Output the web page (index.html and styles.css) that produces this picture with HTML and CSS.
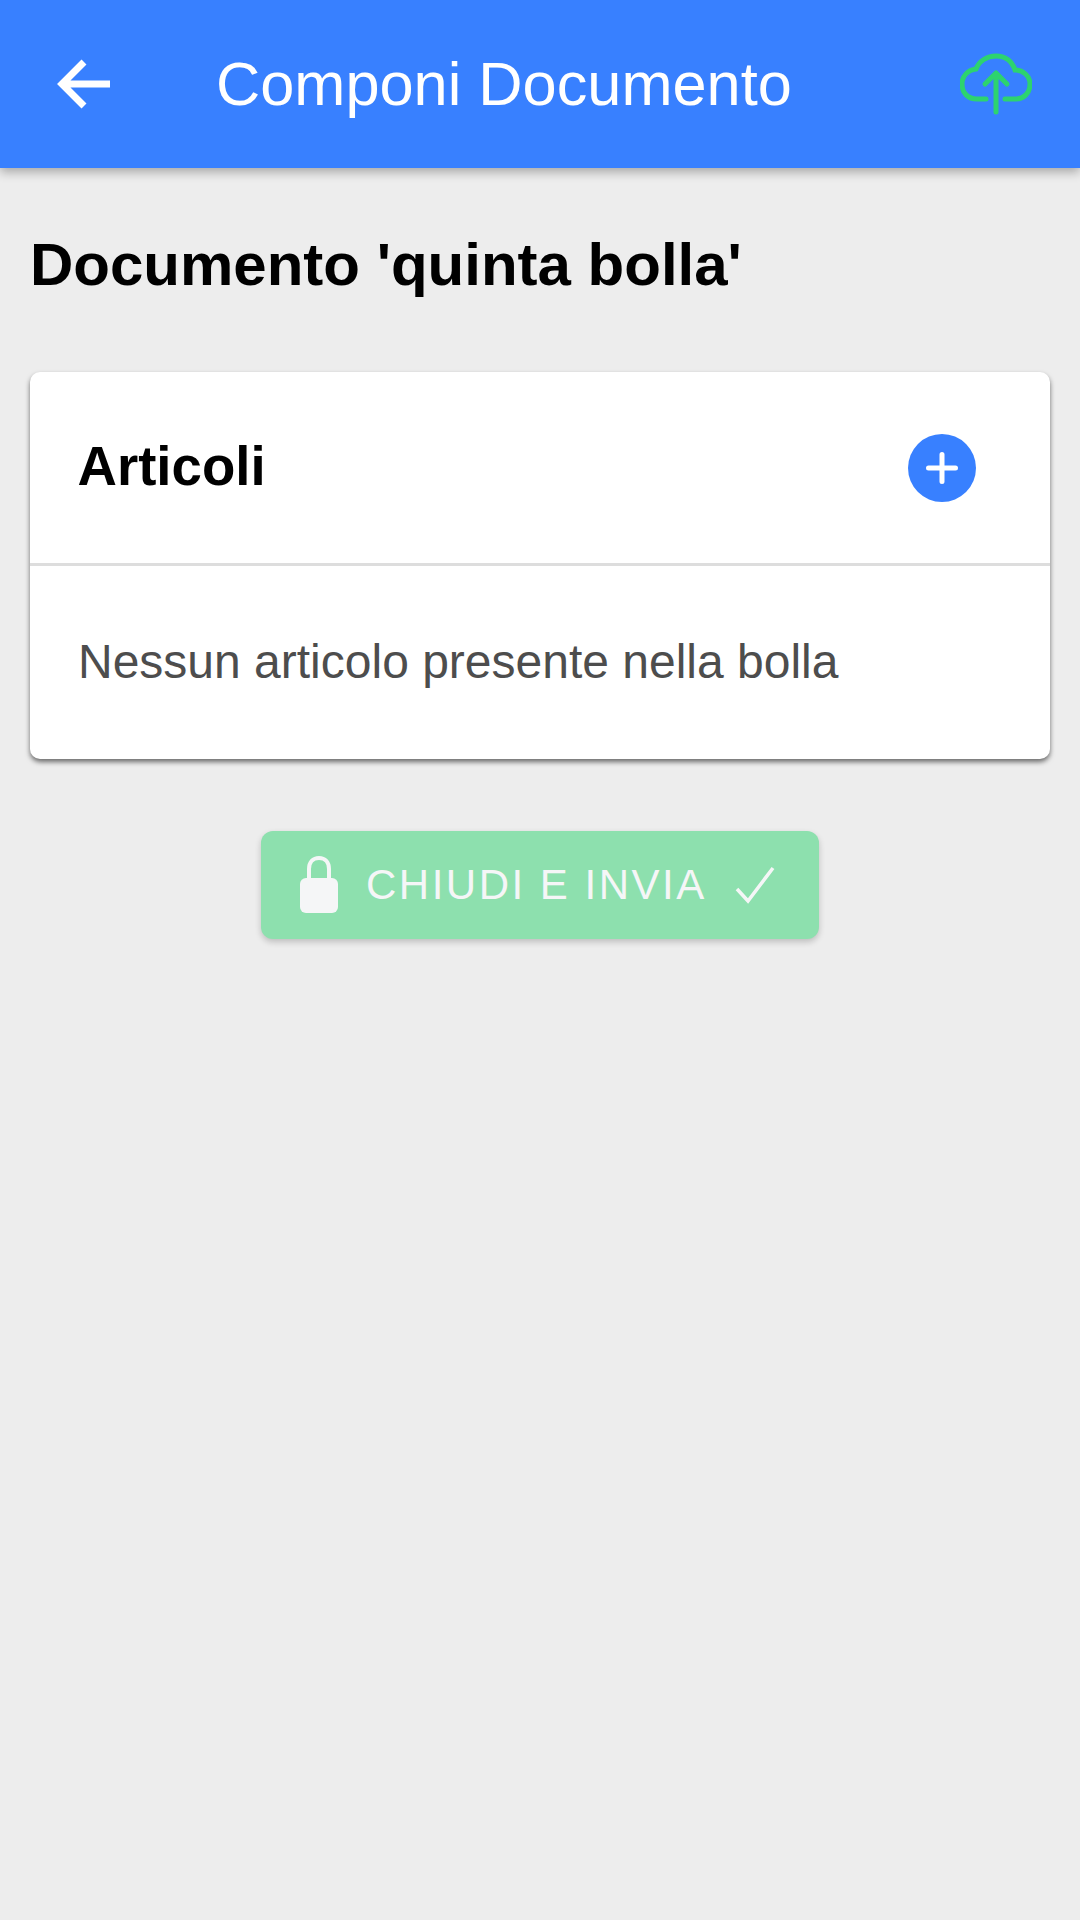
FILE: index.html
```html
<!DOCTYPE html>
<html>
<head>
    <meta charset="utf-8">
    <meta name="viewport" content="width=device-width, initial-scale=1">
    <title>Componi Documento</title>
    <link rel="stylesheet" href="styles.css">
</head>
<body>
    <header class="toolbar">
        <svg class="back-icon" viewBox="0 0 54 50" width="54" height="50">
            <path d="M27 3 L5 25 L27 47 M5 25 H53" fill="none" stroke="#fff" stroke-width="7"/>
        </svg>
        <h1 class="toolbar-title">Componi Documento</h1>
        <svg class="cloud-icon" viewBox="0 0 72 62" width="72" height="62">
            <path d="M26 46 H17 C8 46 2 40 2 31 C2 23 8 17 16 16 C19 8 27 3 36 3 C45 3 52 8 55 17 C63 17 70 23 70 31 C70 40 64 46 55 46 H45" fill="none" stroke="#2dd36f" stroke-width="5" stroke-linecap="round"/>
            <path d="M36 59 V21 M25 31 L36 20 L47 31" fill="none" stroke="#2dd36f" stroke-width="5" stroke-linecap="round" stroke-linejoin="round"/>
        </svg>
    </header>

    <main class="content">
        <h2 class="doc-title">Documento 'quinta bolla'</h2>

        <section class="card">
            <div class="card-head">
                <h3 class="card-title">Articoli</h3>
                <button class="add-btn" type="button">
                    <svg viewBox="0 0 32 32" width="32" height="32">
                        <path d="M16 2.5 V29.5 M2.5 16 H29.5" fill="none" stroke="#fff" stroke-width="5" stroke-linecap="round"/>
                    </svg>
                </button>
            </div>
            <div class="card-body">Nessun articolo presente nella bolla</div>
        </section>

        <div class="actions">
            <button class="send-btn" type="button">
                <svg class="lock-icon" viewBox="0 0 40 58" width="40" height="58">
                    <path d="M10 24 V13 C10 6 14 2 20 2 C26 2 30 6 30 13 V24" fill="none" stroke="#f5f6f7" stroke-width="4"/>
                    <rect x="1" y="22" width="38" height="35" rx="6" fill="#f5f6f7"/>
                </svg>
                <span class="send-label">CHIUDI E INVIA</span>
                <svg class="check-icon" viewBox="0 0 40 38" width="40" height="38">
                    <path d="M2 23 L13 35 L38 2" fill="none" stroke="#f5f6f7" stroke-width="3.5"/>
                </svg>
            </button>
        </div>
    </main>
</body>
</html>
```

FILE: styles.css
```css
* {
  box-sizing: border-box;
}

html, body {
  margin: 0;
  height: 100%;
}

body {
  background: #ededed;
  font-family: "Liberation Sans", Arial, sans-serif;
  min-height: 1920px;
}

.toolbar {
  height: 168px;
  background: #3880ff;
  display: flex;
  align-items: center;
  padding: 0 48px 0 57px;
  box-shadow: 0 4px 10px rgba(0, 0, 0, 0.3);
}

.back-icon {
  flex: none;
}

.toolbar-title {
  flex: 1;
  margin: 0 0 0 105px;
  color: #fff;
  font-size: 61.3px;
  font-weight: 400;
}

.cloud-icon {
  flex: none;
}

.content {
  padding: 0 30px;
}

.doc-title {
  margin: 0;
  padding-top: 62px;
  height: 204px;
  font-size: 60px;
  line-height: 69px;
  font-weight: 700;
  color: #000;
}

.card {
  background: #fff;
  border-radius: 10px;
  box-shadow: 0 3px 5px rgba(0, 0, 0, 0.55);
}

.card-head {
  height: 194px;
  border-bottom: 3px solid #ddd;
  display: flex;
  align-items: center;
  justify-content: space-between;
  padding: 0 74px 0 47.5px;
}

.card-title {
  margin: 0 0 3px;
  font-size: 54.6px;
  font-weight: 700;
  color: #000;
}

.add-btn {
  width: 68px;
  height: 68px;
  padding: 0;
  border: 0;
  border-radius: 50%;
  background: #3880ff;
  display: flex;
  align-items: center;
  justify-content: center;
}

.card-body {
  height: 193px;
  padding: 0 48px 2px;
  display: flex;
  align-items: center;
  font-size: 48px;
  color: #4d4d4d;
}

.actions {
  display: flex;
  justify-content: center;
  padding-top: 72px;
}

.send-btn {
  width: 558px;
  height: 108px;
  border: 0;
  border-radius: 12px;
  background: #8de0ae;
  box-shadow: 0 3px 6px rgba(0, 0, 0, 0.2);
  display: flex;
  align-items: center;
  padding: 0 44px 0 39px;
  color: #f5f6f7;
  font-family: inherit;
}

.lock-icon {
  flex: none;
  margin-left: -1px;
}

.send-label {
  margin-left: 27px;
  font-size: 42px;
  letter-spacing: 2.5px;
  white-space: nowrap;
}

.check-icon {
  flex: none;
  margin-left: auto;
}
```
